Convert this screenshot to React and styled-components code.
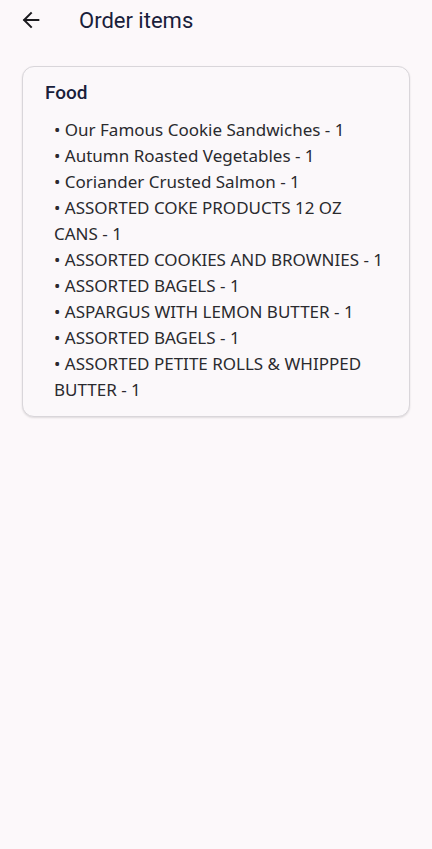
import React from "react";
import styled, { createGlobalStyle } from "styled-components";

const Global = createGlobalStyle`
  html, body { margin: 0; padding: 0; background: #fcf8fa; }
  body { font-family: "Noto Sans", sans-serif; }
`;

const Page = styled.div`
  width: 432px;
  min-height: 849px;
  background: #fcf8fa;
  box-sizing: border-box;
`;

const TopBar = styled.header`
  height: 40px;
  display: flex;
  align-items: center;
  padding-left: 20px;
  gap: 37px;
`;

const BackButton = styled.button`
  border: none;
  background: transparent;
  padding: 0;
  width: 22px;
  height: 22px;
  display: flex;
  align-items: center;
  justify-content: center;
  color: #1c1b1f;
`;

const Title = styled.h1`
  margin: 0;
  font-family: Roboto, sans-serif;
  font-weight: 400;
  font-size: 22px;
  color: #18203a;
  letter-spacing: 0;
`;

const Card = styled.section`
  margin: 26px 22px 0 22px;
  border: 1px solid #d9d6da;
  border-radius: 12px;
  background: #fbf8fa;
  box-shadow: 0 1px 2px rgba(0, 0, 0, 0.12);
  padding: 13px 20px 13px 22px;
`;

const CardTitle = styled.h2`
  margin: 0 0 11px 0;
  font-family: Roboto, sans-serif;
  font-weight: 500;
  font-size: 19px;
  color: #18203a;
  line-height: 26px;
`;

const List = styled.ul`
  list-style: none;
  margin: 0;
  padding: 0 0 0 9px;
`;

const Item = styled.li`
  font-family: "Noto Sans", sans-serif;
  font-size: 17px;
  line-height: 26px;
  color: #2a2a2e;
`;

const items = [
  "Our Famous Cookie Sandwiches - 1",
  "Autumn Roasted Vegetables - 1",
  "Coriander Crusted Salmon - 1",
  "ASSORTED COKE PRODUCTS 12 OZ CANS - 1",
  "ASSORTED COOKIES AND BROWNIES - 1",
  "ASSORTED BAGELS - 1",
  "ASPARGUS WITH LEMON BUTTER - 1",
  "ASSORTED BAGELS - 1",
  "ASSORTED PETITE ROLLS & WHIPPED BUTTER - 1",
];

export default function App() {
  return (
    <Page>
      <Global />
      <TopBar>
        <BackButton aria-label="Back">
          <svg width="22" height="22" viewBox="0 0 24 24" fill="none" stroke="currentColor" strokeWidth="2.2" strokeLinecap="square">
            <path d="M20 12H5" />
            <path d="M12 4.5L4.5 12L12 19.5" />
          </svg>
        </BackButton>
        <Title>Order items</Title>
      </TopBar>
      <Card>
        <CardTitle>Food</CardTitle>
        <List>
          {items.map((t, i) => (
            <Item key={i}>• {t}</Item>
          ))}
        </List>
      </Card>
    </Page>
  );
}
